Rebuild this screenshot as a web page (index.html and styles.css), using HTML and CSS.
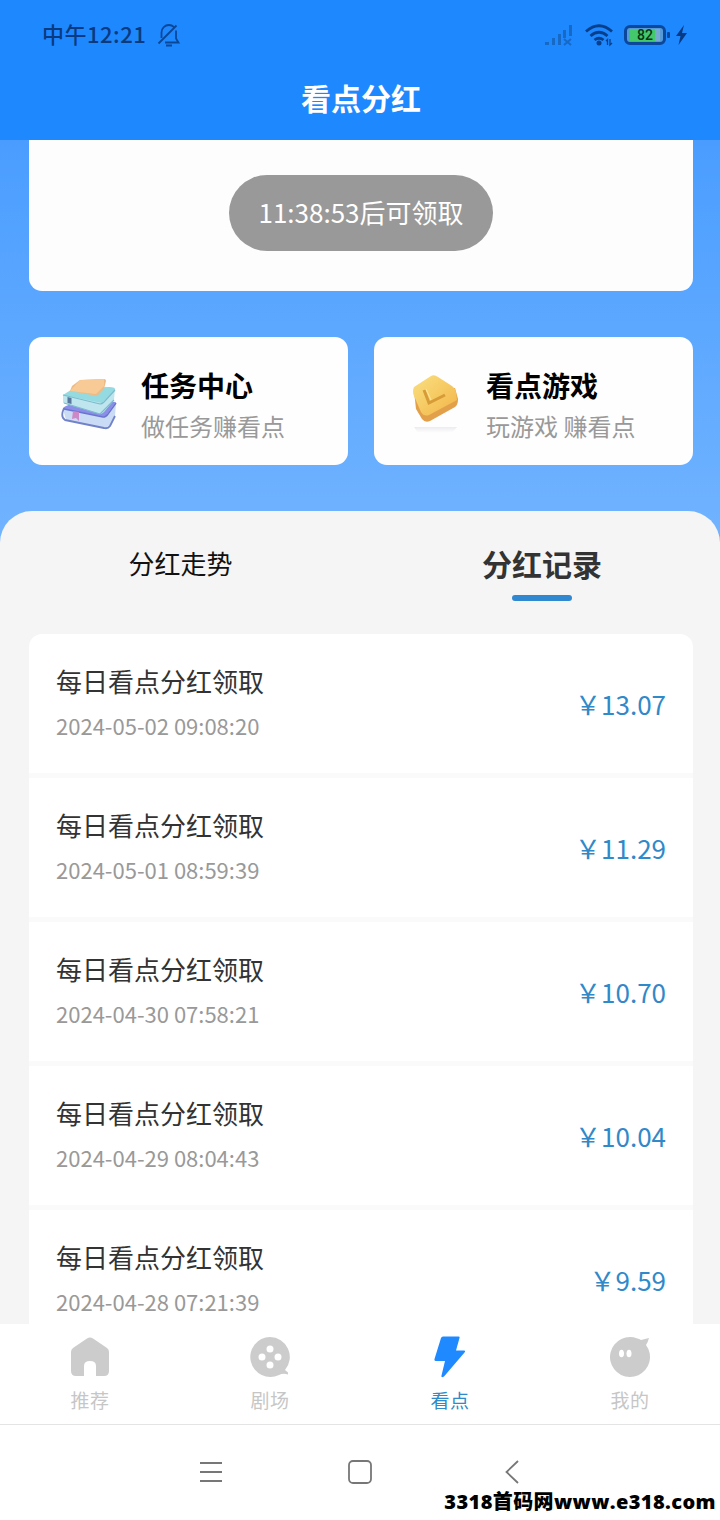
FILE: index.html
```html
<!DOCTYPE html>
<html lang="zh-CN">
<head>
<meta charset="utf-8">
<title>看点分红</title>
<link rel="stylesheet" href="styles.css">
</head>
<body>
<div class="app">
  <header class="header">
    <div class="status">
      <span class="time">中午12:21</span>
      <svg class="bell" width="24" height="24" viewBox="0 0 24 24" fill="none" stroke="#0b4798" stroke-width="1.8"><path d="M4.500 15V9.500C4.500 5 8 2 12 2c2 0 3.500.6 4.800 1.800M19 7.500V15.500l2.500 4H8M9 22.500h6M1.500 20.500L19.500 2.500"/></svg>
      <span class="spacer"></span>
      <svg class="signal" width="28" height="22" viewBox="0 0 28 22" fill="#1769c6"><path d="M0 18h4v3H0zM7 14h3v7H7zM13 10h3v11h-3zM18 6h3v8h-3zM24 1h3v11h-3z"/><path d="M19 15l7 6m0-6l-7 6" stroke="#1769c6" stroke-width="2"/></svg>
      <svg class="wifi" width="30" height="24" viewBox="0 0 30 24" fill="none" stroke="#073f8b" stroke-width="2.800"><path d="M1 8.500Q14 -3 27 8.500M5.500 13Q14 5.500 22.500 13M9.500 17Q14 13.500 18.500 17"/><circle cx="14" cy="20" r="2.500" fill="#073f8b" stroke="none"/><path d="M21 18l1.500-1.500V22M25 16v6l2-2" stroke-width="1.300"/></svg>
      <span class="battery"><span class="level">82</span></span>
      <svg class="charge" width="13" height="20" viewBox="0 0 13 20" fill="#073a83"><path d="M9 0L1 11h4.500L3.500 20 12 8H7z"/></svg>
    </div>
    <h1 class="title">看点分红</h1>
  </header>

  <main class="content">
    <section class="claim"><button class="claim-btn">11:38:53后可领取</button></section>
    <section class="entries">
      <div class="entry">
        <svg class="entry-icon" width="58" height="56" viewBox="0 0 58 56" stroke-linejoin="round">
          <path d="M2 34L5 45 43 53Q47 54 49 51L54 41 55 28 44 42z" fill="#c9dbf5"/>
          <path d="M2 34Q2 32 5 31L20 25 55 27 44 42z" fill="#8b8ee8"/>
          <path d="M3 33Q-1 42 4 45L43 53Q47 54 49 51L54 41" fill="none" stroke="#7182c8" stroke-width="1.800"/>
          <path d="M3 34L42 42Q45 42 47 39L55 28" fill="none" stroke="#6a74cf" stroke-width="1.500"/>
          <path d="M2 20V28L39 39Q41 39 43 37L53 25 54 14z" fill="#bfe6ee"/>
          <path d="M2 20L13 13 48 12Q55 12 54 15L41 28z" fill="#93dbe0"/>
          <path d="M2 20L39 29Q41 29 43 27L54 15M3 28L39 39 53 25" fill="none" stroke="#7cbccd" stroke-width="1.200"/>
          <path d="M9 16L11 11 19 5 43 4Q45 4 45 6L43 14 36 21z" fill="#edbb85"/>
          <path d="M9 16L18 6Q19 5 21 5L43 4 43 11 35 19z" fill="#f8ca95"/>
          <path d="M6.500 22l4 1v6l-4-1z" fill="#59769c"/>
          <path d="M12 36l6 1v9l-3-3-4 1z" fill="#cd88c7"/>
        </svg>
        <div class="entry-text"><h2>任务中心</h2><p>做任务赚看点</p></div>
      </div>
      <div class="entry">
        <svg class="entry-icon" width="58" height="60" viewBox="0 0 58 60">
          <defs>
            <linearGradient id="gold" x1="0" y1="0" x2="1" y2="1"><stop offset="0" stop-color="#f9e080"/><stop offset="1" stop-color="#f3b548"/></linearGradient>
            <linearGradient id="shade" x1="0" y1="0" x2="0" y2="1"><stop offset="0" stop-color="#ececee"/><stop offset="1" stop-color="#fff"/></linearGradient>
          </defs>
          <path d="M8 18L10 36 16 46Q19 50 24 48L49 34Q52 32 52 26L49 15z" fill="#e2a04a"/>
          <path d="M8 14L25 3Q28 1 32 4L46 13Q49 15 50 19L51 27 23 42Q18 44 15 39L8 23Q6 18 8 14z" fill="url(#gold)"/>
          <path d="M18 17l5 13 16-8" fill="none" stroke="#d79b38" stroke-width="3"/>
          <path d="M20 16l5 11" fill="none" stroke="#ffe89b" stroke-width="1"/>
          <path d="M8 54h43l-5 6H12z" fill="url(#shade)"/>
        </svg>
        <div class="entry-text"><h2>看点游戏</h2><p>玩游戏 赚看点</p></div>
      </div>
    </section>

    <section class="panel">
      <nav class="tabs"><span class="tab">分红走势</span><span class="tab active">分红记录</span></nav>
      <ul class="records">
        <li class="record"><div><h3>每日看点分红领取</h3><time>2024-05-02 09:08:20</time></div><span class="amount">￥13.07</span></li>
        <li class="record"><div><h3>每日看点分红领取</h3><time>2024-05-01 08:59:39</time></div><span class="amount">￥11.29</span></li>
        <li class="record"><div><h3>每日看点分红领取</h3><time>2024-04-30 07:58:21</time></div><span class="amount">￥10.70</span></li>
        <li class="record"><div><h3>每日看点分红领取</h3><time>2024-04-29 08:04:43</time></div><span class="amount">￥10.04</span></li>
        <li class="record"><div><h3>每日看点分红领取</h3><time>2024-04-28 07:21:39</time></div><span class="amount">￥9.59</span></li>
      </ul>
    </section>
  </main>

  <nav class="tabbar">
    <div class="item"><svg width="42" height="42" viewBox="0 0 42 42" fill="#ccc"><path d="M18 2.500Q21 .5 24 2.500L38 12Q40 13.500 40 16V35Q40 40 35 40H27V30Q27 25 21 25T15 30V40H7Q2 40 2 35V16Q2 13.500 4 12z"/></svg><span>推荐</span></div>
    <div class="item"><svg width="42" height="42" viewBox="0 0 42 42"><path d="M21 1A20 20 0 1 0 30 39Q34 37 39 38.500V36.500L36 34A20 20 0 0 0 21 1z" fill="#ccc"/><g fill="#fff"><circle cx="21" cy="13" r="3.500"/><circle cx="13" cy="21" r="3.500"/><circle cx="29" cy="21" r="3.500"/><circle cx="21" cy="29" r="3.500"/></g></svg><span>剧场</span></div>
    <div class="item current"><svg width="42" height="42" viewBox="0 0 42 42" fill="#1f8aff"><path d="M14 .5H29.500Q31 .5 30.500 2L27 14.500H35Q37 14.500 35.500 16.500L15 40.500Q12 42.500 12.500 39.500L16 25H7Q5 25 5.500 23L12 2Q12.500 .5 14 .5z"/></svg><span>看点</span></div>
    <div class="item"><svg width="42" height="42" viewBox="0 0 42 42"><path d="M21 1C26 1 30 3 32 4L40 2Q39 6 37 9A20 20 0 1 1 21 1z" fill="#ccc"/><g fill="#fff"><ellipse cx="12.500" cy="17.500" rx="2.500" ry="3.800"/><ellipse cx="20" cy="17.500" rx="2.500" ry="3.800"/></g></svg><span>我的</span></div>
  </nav>

  <footer class="sysnav">
    <svg width="24" height="24" viewBox="0 0 24 24"><path d="M1 3h22M1 12h22M1 21h22"/></svg>
    <svg width="26" height="26" viewBox="0 0 26 26"><rect x="2" y="2" width="22" height="22" rx="4"/></svg>
    <svg width="16" height="26" viewBox="0 0 16 26"><path d="M14 2L2.500 13 14 24"/></svg>
    <span class="watermark">3318首码网www.e318.com</span>
  </footer>
</div>
</body>
</html>
```
FILE: styles.css
```css
* { box-sizing: border-box; margin: 0; padding: 0; }
body { font-family: "Noto Sans CJK SC", sans-serif; background: #fff; }
svg { display: block; flex: none; }

.app { display: flex; flex-direction: column; width: 720px; height: 1520px; overflow: hidden; }

.header { height: 140px; flex: none; background: #1e88ff; }
.status { display: flex; align-items: center; height: 70px; padding: 0 32px 0 42px; }
.time { font-size: 22px; font-weight: 500; letter-spacing: 0.5px; color: #0a3a80; padding-bottom: 4px; }
.bell { margin-left: 11px; }
.spacer { flex: 1; }
.wifi { margin-left: 12px; }
.battery { position: relative; display: flex; width: 42px; height: 20px; margin-left: 9px; padding: 1px 3px; border: 3px solid #0b489c; border-radius: 6px; background: #569bd8; }
.battery::after { content: ""; position: absolute; right: -7px; top: 4px; width: 3px; height: 6px; border-radius: 1px; background: #0b489c; }
.level { width: 30px; height: 12px; background: linear-gradient(90deg, #43c96c 82%, #78a9d0 82%); color: #073716; font: 500 14px/12px "Roboto", sans-serif; text-align: center; }
.charge { margin-left: 9px; }
.title { color: #fff; font-size: 30px; line-height: 44px; font-weight: 700; text-align: center; padding: 5px 0 0 2px; }

.content { display: flex; flex-direction: column; height: 1184px; flex: none; overflow: hidden; background: linear-gradient(#4a9dff 0, #70b3ff 390px); }
.claim { flex: none; height: 151px; margin: 0 27px 0 29px; padding-top: 35px; background: #fdfdfd; border-radius: 0 0 13px 13px; text-align: center; }
.claim-btn { width: 264px; height: 76px; border: 0; border-radius: 38px; background: #999; color: #fff; font: 400 26px/74px "Noto Sans CJK SC", sans-serif; padding-bottom: 2px; }

.entries { display: grid; grid-template-columns: 1fr 1fr; gap: 26px; flex: none; height: 128px; margin: 46px 27px 0 29px; }
.entry { display: flex; align-items: center; padding-left: 32px; background: #fefefe; border-radius: 13px; }
.entry-icon { width: 58px; margin-top: 4px; }
.entry-text { margin-left: 22px; padding-top: 6px; white-space: nowrap; }
.entry-text h2 { font-size: 28px; line-height: 42px; font-weight: 700; color: #000; }
.entry-text p { font-size: 24px; line-height: 39px; color: #999; }

.panel { flex: 1; margin-top: 46px; padding: 0 27px 0 29px; background: #f5f5f5; border-radius: 32px 32px 0 0; }
.tabs { display: grid; grid-template-columns: 1fr 1fr; height: 123px; margin: 0 -27px 0 -29px; }
.tab { display: flex; flex-direction: column; align-items: center; padding: 33px 0 0 1px; font-size: 26px; line-height: 38px; color: #111; }
.active { padding: 30px 0 0 4px; font-size: 30px; line-height: 44px; font-weight: 700; color: #333; }
.active::after { content: ""; width: 60px; height: 6px; margin-top: 10px; border-radius: 3px; background: #3089d0; }

.records { list-style: none; border-radius: 13px 13px 0 0; background: #fff; }
.record { display: flex; align-items: center; justify-content: space-between; height: 144px; padding: 0 27px; border-bottom: 5px solid #fafafa; }
.record div { padding-bottom: 4px; }
.record h3 { font-size: 26px; line-height: 40px; font-weight: 400; color: #333; }
.record time { display: block; margin-top: 7px; font-size: 22px; line-height: 34px; color: #999; }
.amount { font-size: 26px; color: #3089c8; }

.tabbar { display: grid; grid-template-columns: repeat(4, 1fr); flex: none; height: 101px; background: #fff; border-bottom: 1px solid #e4e4e4; }
.item { display: flex; flex-direction: column; align-items: center; padding-top: 12px; color: #c6c6c6; font-size: 19px; line-height: 30px; }
.item span { margin-top: 7px; letter-spacing: 0.5px; }
.current { color: #3089c8; }

.sysnav { position: relative; display: flex; flex: 1; align-items: flex-start; padding: 34px 0 0 199px; background: #fff; }
.sysnav svg { fill: none; stroke: #777; stroke-width: 1.8; }
.sysnav svg:nth-of-type(1) { margin-top: 1px; }
.sysnav svg:nth-of-type(2) { margin-left: 124px; }
.sysnav svg:nth-of-type(3) { margin-left: 131px; }
.watermark { position: absolute; right: 4px; bottom: 4px; font: 800 20px/28px "Open Sans", "Noto Sans CJK SC", sans-serif; letter-spacing: 0.4px; color: #000; white-space: nowrap; text-shadow: 0 0 2px #fff; }
```
